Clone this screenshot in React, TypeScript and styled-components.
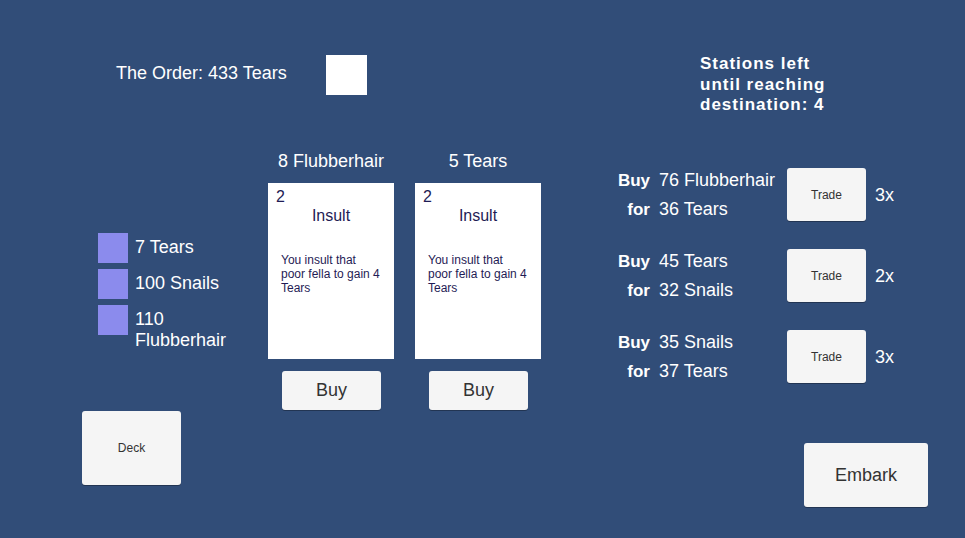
import styled, { createGlobalStyle } from 'styled-components';

const GlobalStyle = createGlobalStyle`
  html, body {
    margin: 0;
    padding: 0;
    background: #314d78;
  }
  body {
    font-family: "Liberation Sans", Arial, sans-serif;
  }
`;

type Resource = { color: string; label: string };
type ShopCard = { price: string; cost: number; title: string; text: string };
type Trade = { buy: string; pay: string; left: number };

const RESOURCES: Resource[] = [
  { color: '#8b8bed', label: '7 Tears' },
  { color: '#8b8bed', label: '100 Snails' },
  { color: '#8b8bed', label: '110 Flubberhair' },
];

const CARDS: ShopCard[] = [
  { price: '8 Flubberhair', cost: 2, title: 'Insult', text: 'You insult that poor fella to gain 4 Tears' },
  { price: '5 Tears', cost: 2, title: 'Insult', text: 'You insult that poor fella to gain 4 Tears' },
];

const TRADES: Trade[] = [
  { buy: '76 Flubberhair', pay: '36 Tears', left: 3 },
  { buy: '45 Tears', pay: '32 Snails', left: 2 },
  { buy: '35 Snails', pay: '37 Tears', left: 3 },
];

function App() {
  return (
    <>
      <GlobalStyle />
      <Page>
        <TopBar>
          <OrderGroup>
            <OrderText>The Order: 433 Tears</OrderText>
            <OrderSlot />
          </OrderGroup>
          <Stations>
            Stations left
            <br />
            until reaching
            <br />
            destination: 4
          </Stations>
        </TopBar>

        <Main>
          <LeftColumn>
            <ResourceList>
              {RESOURCES.map((r) => (
                <ResourceRow key={r.label}>
                  <ResourceIcon $color={r.color} />
                  <ResourceLabel>{r.label}</ResourceLabel>
                </ResourceRow>
              ))}
            </ResourceList>
            <DeckButton>Deck</DeckButton>
          </LeftColumn>

          <CardsColumn>
            {CARDS.map((c, i) => (
              <CardSlot key={i}>
                <Price>{c.price}</Price>
                <Card>
                  <Cost>{c.cost}</Cost>
                  <CardTitle>{c.title}</CardTitle>
                  <CardText>{c.text}</CardText>
                </Card>
                <BuyButton>Buy</BuyButton>
              </CardSlot>
            ))}
          </CardsColumn>

          <RightColumn>
            <TradeList>
              {TRADES.map((t, i) => (
                <TradeRow key={i}>
                  <TradeTerms>
                    <TermLine>
                      <TermLabel>Buy</TermLabel>
                      <TermValue>{t.buy}</TermValue>
                    </TermLine>
                    <TermLine>
                      <TermLabel>for</TermLabel>
                      <TermValue>{t.pay}</TermValue>
                    </TermLine>
                  </TradeTerms>
                  <TradeButton>Trade</TradeButton>
                  <TradeCount>{t.left}x</TradeCount>
                </TradeRow>
              ))}
            </TradeList>
            <EmbarkButton>Embark</EmbarkButton>
          </RightColumn>
        </Main>
      </Page>
    </>
  );
}

export default App;

const Page = styled.div`
  width: 965px;
  height: 538px;
  overflow: hidden;
  background: #314d78;
  color: #ffffff;
  font-family: "Liberation Sans", Arial, sans-serif;
`;

const TopBar = styled.div`
  display: grid;
  grid-template-columns: 584px auto;
  padding: 53px 0 0 116px;
  height: 62px;
  align-items: start;
`;

const OrderGroup = styled.div`
  display: flex;
  align-items: center;
  gap: 39px;
  margin-top: 2px;
`;

const OrderText = styled.span`
  font-size: 18px;
  line-height: 21px;
  margin-top: -3px;
`;

const OrderSlot = styled.div`
  width: 41px;
  height: 40px;
  background: #ffffff;
`;

const Stations = styled.div`
  font-size: 17px;
  line-height: 20.5px;
  font-weight: bold;
  letter-spacing: 1px;
  margin-top: 1px;
`;

const Main = styled.div`
  display: flex;
  margin-top: 35px;
  padding-left: 82px;
`;

const LeftColumn = styled.div`
  width: 186px;
  display: flex;
  flex-direction: column;
  align-items: flex-start;
`;

const ResourceList = styled.div`
  display: flex;
  flex-direction: column;
  gap: 6px;
  margin: 83px 0 0 16px;
`;

const ResourceRow = styled.div`
  display: flex;
  align-items: flex-start;
  gap: 7px;
`;

const ResourceIcon = styled.div<{ $color: string }>`
  width: 30px;
  height: 30px;
  flex: none;
  background: ${(p) => p.$color};
`;

const ResourceLabel = styled.span`
  font-size: 18px;
  line-height: 21px;
  margin-top: 4px;
  max-width: 100px;
`;

const Button = styled.div`
  display: flex;
  align-items: center;
  justify-content: center;
  background: #f5f5f5;
  color: #333333;
  border-radius: 3px;
  box-shadow: 0 1px 0 rgba(0, 0, 0, 0.3);
`;

const DeckButton = styled(Button)`
  width: 99px;
  height: 74px;
  margin-top: 60px;
  font-size: 12px;
`;

const CardsColumn = styled.div`
  width: 349px;
  display: flex;
  gap: 21px;
  align-items: flex-start;
`;

const CardSlot = styled.div`
  width: 126px;
  display: flex;
  flex-direction: column;
`;

const Price = styled.div`
  font-size: 18px;
  line-height: 20px;
  text-align: center;
  margin-top: 1px;
`;

const Card = styled.div`
  height: 176px;
  margin-top: 12px;
  background: #ffffff;
  color: #1f1c55;
  padding: 4.5px 0 0 8px;
  box-sizing: border-box;
`;

const Cost = styled.div`
  font-size: 16px;
  line-height: 18px;
`;

const CardTitle = styled.div`
  font-size: 16px;
  line-height: 18px;
  text-align: center;
  margin: 1px 0 0 -8px;
`;

const CardText = styled.div`
  font-size: 12px;
  line-height: 14px;
  margin: 28px 0 0 5px;
  width: 100px;
`;

const BuyButton = styled(Button)`
  width: 99px;
  height: 39px;
  margin: 11.5px 0 0 14px;
  font-size: 18px;
`;

const RightColumn = styled.div`
  display: flex;
  flex-direction: column;
  align-items: flex-start;
`;

const TradeList = styled.div`
  display: flex;
  flex-direction: column;
  gap: 24px;
  margin-top: 16px;
`;

const TradeRow = styled.div`
  display: flex;
  align-items: center;
  height: 57px;
`;

const TradeTerms = styled.div`
  width: 170px;
  display: flex;
  flex-direction: column;
`;

const TermLine = styled.div`
  display: flex;
  align-items: baseline;
  height: 28.5px;
  line-height: 28.5px;
`;

const TermLabel = styled.span`
  width: 33px;
  text-align: right;
  font-weight: bold;
  font-size: 17px;
`;

const TermValue = styled.span`
  margin-left: 9px;
  font-size: 18px;
  white-space: nowrap;
`;

const TradeButton = styled(Button)`
  width: 79px;
  height: 53px;
  font-size: 12px;
`;

const TradeCount = styled.span`
  margin-left: 9px;
  font-size: 18px;
  margin-top: 2px;
`;

const EmbarkButton = styled(Button)`
  width: 124px;
  height: 64px;
  margin: 58px 0 0 187px;
  font-size: 18px;
`;
